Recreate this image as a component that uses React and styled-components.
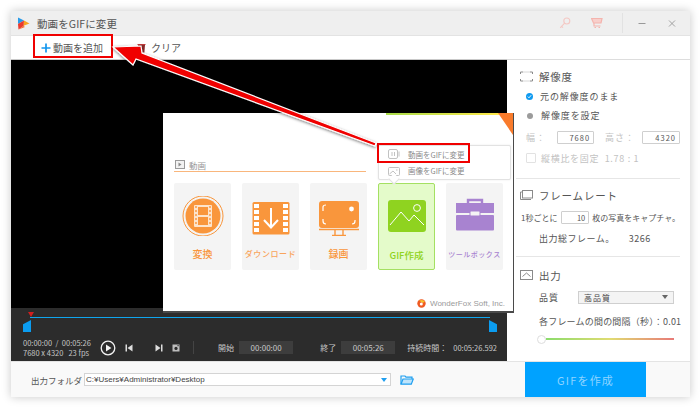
import React from 'react'
import styled, { createGlobalStyle } from 'styled-components'

const Global = createGlobalStyle`
  html, body { margin: 0; background: #fff; }
  * { box-sizing: border-box; }
  body { font-family: "Noto Sans CJK JP", "Noto Sans", sans-serif; }
`
const Stage = styled.div`
  position: relative;
  width: 700px;
  height: 407px;
  padding: 11px 10px 10px 11px;
  overflow: hidden;
`
const Window = styled.div`
  width: 679px;
  height: 386px;
  display: flex;
  flex-direction: column;
  background: #fff;
  box-shadow: 0 0 9px rgba(0, 0, 0, 0.22);
`
const TitleBar = styled.div`
  height: 25px;
  display: flex;
  align-items: center;
  padding-left: 6px;
  background: #efefef;
  border-bottom: 1px solid #e3e3e3;
`
const Title = styled.span`
  margin-left: 7px;
  font-size: 10.5px;
  color: #555;
  letter-spacing: 0.1px;
`
const TitleActions = styled.div`
  margin-left: auto;
  display: flex;
  align-items: center;
  height: 100%;
`
const Sep = styled.div`
  width: 1px;
  height: 20px;
  margin: 0 15px 0 19px;
  background: #e2e2e2;
`
const Toolbar = styled.div`
  height: 24px;
  display: flex;
  align-items: center;
  padding-left: 30px;
  background: #fff;
  border-bottom: 1px solid #c9c9c9;
`
const ToolButton = styled.div`
  display: flex;
  align-items: center;
  gap: 2px;
  width: ${p => p.$w}px;
  font-size: 10px;
  color: #555;
`
const Main = styled.div`
  height: 301px;
  display: flex;
`
const Left = styled.div`
  width: 496px;
  display: flex;
  flex-direction: column;
`
const Video = styled.div`
  flex: 1;
  background: #000;
`
const Controls = styled.div`
  height: 53px;
  padding: 4px 10px 0 12px;
  background: #2c2c2c;
  color: #c8c8c8;
`
const Track = styled.div`
  position: relative;
  height: 24px;
`
const TrackLine = styled.div`
  position: absolute;
  left: 7px;
  right: 7px;
  top: 5px;
  height: 1px;
  background: #10a6ee;
`
const Handle = styled.div`
  position: absolute;
  top: 8px;
  ${p => (p.$right ? 'right: 0;' : 'left: 0;')}
  width: 8px;
  height: 12px;
  background: #0b9cf0;
  clip-path: ${p =>
    p.$right
      ? 'polygon(0 0, 100% 35%, 100% 100%, 0 100%)'
      : 'polygon(100% 0, 0 35%, 0 100%, 100% 100%)'};
`
const Pin = styled.div`
  position: absolute;
  left: 5px;
  top: 0;
  width: 0;
  height: 0;
  border-left: 3.5px solid transparent;
  border-right: 3.5px solid transparent;
  border-top: 5px solid #d11f1f;
`
const ControlRow = styled.div`
  display: flex;
  align-items: center;
  height: 23px;
`
const TimeInfo = styled.div`
  width: 78px;
  font-size: 7.5px;
  line-height: 10px;
  white-space: pre;
  color: #c4c4c4;
`
const Buttons = styled.div`
  width: 95px;
  display: flex;
  align-items: center;
  gap: 9px;
`
const VSep = styled.div`
  width: 1px;
  height: 13px;
  margin-right: 24px;
  background: #444;
`
const CtlLabel = styled.span`
  font-size: 8px;
  margin-right: ${p => p.$mr || 5}px;
  white-space: nowrap;
`
const TimeBox = styled.div`
  width: 55px;
  height: 13px;
  margin-right: ${p => p.$mr || 0}px;
  background: #3d3d3d;
  color: #c8c8c8;
  font-size: 8px;
  line-height: 13px;
  text-align: center;
`
const Duration = styled.span`
  font-size: 7.5px;
`
const Panel = styled.div`
  width: 183px;
  padding: 0 10px 0 9px;
  background: #fff;
  border-top: 1px solid #ddd;
  margin-top: -1px;
  font-size: 9px;
  color: #555;
`
const Section = styled.div`
  padding: ${p => p.$pt}px 0 ${p => p.$pb}px;
  border-bottom: ${p => (p.$last ? 'none' : '1px solid #e6e6e6')};
`
const Row = styled.div`
  display: flex;
  align-items: center;
  height: ${p => p.$h}px;
  padding-left: ${p => p.$pl || 0}px;
  color: ${p => (p.$muted ? '#c2c2c2' : '#555')};
  white-space: nowrap;
  letter-spacing: ${p => p.$ls || 0}px;
`
const HeadText = styled.span`
  font-size: 10.5px;
  margin-left: 6px;
  letter-spacing: 0.8px;
  color: #555;
`
const RadioOn = styled.span`
  width: 7px;
  height: 7px;
  margin-right: 7px;
  border-radius: 50%;
  background: #0f9af0;
  display: flex;
  align-items: center;
  justify-content: center;
`
const RadioOff = styled.span`
  width: 6px;
  height: 6px;
  margin: 0 8px 0 1px;
  border-radius: 50%;
  background: #9b9b9b;
`
const NumBox = styled.div`
  width: ${p => p.$w}px;
  height: 13px;
  margin: ${p => p.$m || '0'};
  padding-right: 3px;
  border: 1px solid #cfcfcf;
  border-radius: 1px;
  background: #fff;
  color: #555;
  font-size: 7.5px;
  line-height: 11px;
  text-align: right;
`
const Check = styled.span`
  width: 10px;
  height: 10px;
  margin-right: 5px;
  border: 1px solid #e2e2e2;
  border-radius: 1px;
`
const SelectBox = styled.div`
  width: 96px;
  height: 13px;
  margin-left: 19px;
  padding: 0 5px;
  display: flex;
  align-items: center;
  justify-content: space-between;
  border: 1px solid #cfcfcf;
  background: #f4f4f4;
  font-size: 8px;
  color: #444;
`
const CaretDown = styled.span`
  width: 0;
  height: 0;
  border-left: 3px solid transparent;
  border-right: 3px solid transparent;
  border-top: 4px solid ${p => p.$c || '#666'};
`
const Slider = styled.div`
  display: flex;
  align-items: center;
  height: 12px;
  padding-left: 21px;
`
const Thumb = styled.span`
  width: 9px;
  height: 9px;
  border: 1px solid #ddd;
  border-radius: 50%;
  background: #fff;
`
const Grad = styled.span`
  width: 128px;
  height: 2px;
  background: linear-gradient(90deg, #8bdc6c, #e0dc72 50%, #e87a78);
`
const Bottom = styled.div`
  flex: 1;
  display: flex;
  align-items: center;
  padding-left: 20px;
  background: #f9f9f9;
  border-top: 1px solid #e4e4e4;
`
const FolderLabel = styled.span`
  width: 53px;
  font-size: 8.5px;
  color: #555;
  white-space: nowrap;
`
const PathBox = styled.div`
  width: 307px;
  height: 13px;
  display: flex;
  align-items: center;
  justify-content: space-between;
  padding: 0 3px 0 1px;
  border: 1px solid #d4d4d4;
  background: #fff;
  font-family: "Liberation Sans", sans-serif;
  font-size: 8px;
  color: #444;
`
const GoButton = styled.div`
  width: 121px;
  height: 35px;
  margin-left: 111px;
  display: flex;
  align-items: center;
  justify-content: center;
  background: #00a2ff;
  color: #8fd4ff;
  font-size: 11px;
  letter-spacing: 1.2px;
`

/* the pasted-in start screen and the red annotations lie over the app */
const Inset = styled.div`
  position: absolute;
  left: 163px;
  top: 113px;
  width: 351px;
  height: 200px;
  padding: 45px 0 0 11px;
  background: #fff;
  border-right: 1px solid #4a4a4a;
  border-bottom: 2px solid #4a4a4a;
  overflow: visible;
`
const Stripe = styled.div`
  position: absolute;
  left: 223px;
  right: 14px;
  top: 0;
  height: 2px;
  background: linear-gradient(90deg, #a9dc4a, #ffe94a);
`
const Corner = styled.div`
  position: absolute;
  right: 0;
  top: 0;
  width: 15px;
  height: 22px;
  background: #f97b2c;
  clip-path: polygon(0 0, 100% 0, 100% 100%);
`
const SectionHead = styled.div`
  width: 192px;
  height: 14px;
  display: flex;
  align-items: center;
  gap: 4px;
  padding-left: 1px;
  border-bottom: 1px solid #f9b67c;
  font-size: 8.5px;
  color: #999;
`
const Cards = styled.div`
  display: flex;
  gap: 11px;
  margin-top: 11px;
`
const Card = styled.div`
  width: 57px;
  height: 87px;
  padding-top: 13px;
  display: flex;
  flex-direction: column;
  align-items: center;
  border-radius: 2px;
  background: ${p => (p.$active ? '#e4fbca' : '#f4f4f4')};
  border: ${p => (p.$active ? '1px solid #a4e062' : 'none')};
`
const CardLabel = styled.div`
  height: 14px;
  margin-top: 11px;
  font-size: ${p => p.$fs || 10}px;
  line-height: 14px;
  letter-spacing: ${p => p.$ls || 0}px;
  color: ${p => p.$c};
  font-weight: 500;
  white-space: nowrap;
`
const Credit = styled.div`
  position: absolute;
  right: 8px;
  bottom: 3px;
  display: flex;
  align-items: center;
  gap: 4px;
  font-family: "Liberation Sans", sans-serif;
  font-size: 8px;
  color: #9a9a9a;
`
const Popup = styled.div`
  position: absolute;
  left: 215px;
  top: 32px;
  width: 133px;
  height: 35px;
  padding-left: 9px;
  display: flex;
  flex-direction: column;
  background: #fff;
  border: 1px solid #e2e2e2;
  border-radius: 2px;
  box-shadow: 0 0 2px rgba(0, 0, 0, 0.1);
  &::after {
    content: "";
    position: absolute;
    left: 11px;
    bottom: -4px;
    width: 7px;
    height: 7px;
    background: #fff;
    border-right: 1px solid #e2e2e2;
    border-bottom: 1px solid #e2e2e2;
    transform: rotate(45deg);
  }
`
const PopItem = styled.div`
  flex: 1;
  display: flex;
  align-items: center;
  gap: 8px;
  font-size: 7.5px;
  color: #8a8a8a;
`
const RedBox = styled.div`
  position: absolute;
  left: ${p => p.$x}px;
  top: ${p => p.$y}px;
  width: ${p => p.$w}px;
  height: ${p => p.$h}px;
  border: 2px solid #f00000;
`
const ArrowLayer = styled.svg`
  position: absolute;
  left: 0;
  top: 0;
  width: 700px;
  height: 407px;
  pointer-events: none;
`

const Logo = () => (
  <svg width="13" height="13" viewBox="0 0 13 13">
    <path d="M1 0.5 L7 3.5 L1 7z" fill="#2a9be8" />
    <path d="M7 3.5 L12.5 6.5 L6 9z" fill="#f7a520" />
    <path d="M1 7 L7 3.5 L6.5 9 L1.5 12.5z" fill="#ea3a2e" />
    <path d="M1.5 12.5 L6.5 9 L8 10z" fill="#f26a2a" />
  </svg>
)
const Key = () => (
  <svg width="12" height="12" viewBox="0 0 12 12" fill="none" stroke="#f4c8c4" strokeWidth="1.1">
    <circle cx="7.8" cy="4" r="3" />
    <path d="M5.6 6.2 L1.2 10.8 M2.6 9.4 L4 10.6" />
  </svg>
)
const Cart = () => (
  <svg width="12" height="12" viewBox="0 0 12 12" fill="none" stroke="#f4b4ae" strokeWidth="1.2">
    <path d="M0.5 1.5 H11 L10 6 H2.5z" fill="#f8cfcb" />
    <path d="M3 6 V9 H9.5 M3.5 10.5 h1.5 M7.5 10.5 h1.5" />
  </svg>
)
const Plus = () => (
  <svg width="10" height="10" viewBox="0 0 10 10">
    <path d="M5 0.5 V9.5 M0.5 5 H9.5" stroke="#1296ee" strokeWidth="1.7" />
  </svg>
)
const Trash = () => (
  <svg width="9" height="10" viewBox="0 0 9 10">
    <path d="M1 2 H8 L7.4 9.5 H1.6z" fill="#8d2c2c" />
    <path d="M0.5 1.5 H8.5" stroke="#c23a3a" strokeWidth="1" />
  </svg>
)
const Play = () => (
  <svg width="16" height="16" viewBox="0 0 16 16">
    <circle cx="8" cy="8" r="6.8" fill="none" stroke="#f2f2f2" strokeWidth="1.3" />
    <path d="M6 4.6 L11.4 8 L6 11.4z" fill="#f2f2f2" />
  </svg>
)
const Prev = () => (
  <svg width="8" height="8" viewBox="0 0 8 8" fill="#ddd">
    <path d="M0.5 0.5 H2 V7.5 H0.5z M7.5 0.5 V7.5 L2.5 4z" />
  </svg>
)
const Next = () => (
  <svg width="8" height="8" viewBox="0 0 8 8" fill="#ddd">
    <path d="M7.5 0.5 H6 V7.5 H7.5z M0.5 0.5 V7.5 L5.5 4z" />
  </svg>
)
const Snap = () => (
  <svg width="8" height="8" viewBox="0 0 8 8">
    <rect x="0.5" y="0.5" width="7" height="7" fill="#bdbdbd" />
    <circle cx="4" cy="4.4" r="1.6" fill="#2c2c2c" />
    <rect x="5.4" y="1.2" width="1.4" height="1" fill="#2c2c2c" />
  </svg>
)
const ResIcon = () => (
  <svg width="13" height="11" viewBox="0 0 13 11" fill="none" stroke="#8a8a8a" strokeWidth="1">
    <path d="M0.5 3 V1 H3 M10 1 H12.5 V3 M12.5 8 V10 H10 M3 10 H0.5 V8" />
    <path d="M3 1 H10 M3 10 H10" stroke="#d8d8d8" />
  </svg>
)
const FrameIcon = () => (
  <svg width="13" height="10" viewBox="0 0 13 10" fill="none" stroke="#8a8a8a" strokeWidth="1">
    <rect x="2.5" y="0.5" width="10" height="7.5" />
    <path d="M2.5 2 H0.5 V9.5 H11" />
  </svg>
)
const OutIcon = () => (
  <svg width="13" height="10" viewBox="0 0 13 10" fill="none" stroke="#8a8a8a" strokeWidth="1">
    <rect x="0.5" y="0.5" width="12" height="9" />
    <path d="M2.5 6.5 L6.5 3 L10.5 6.5" />
  </svg>
)
const Folder = () => (
  <svg width="14" height="10" viewBox="0 0 14 10" fill="none" stroke="#1f9ff0" strokeWidth="1.2">
    <path d="M1 9 V1 H5 L6 2.2 H12 V4" />
    <path d="M1 9.2 L3 4 H13.3 L11.3 9.2z" fill="#bfe4fb" />
  </svg>
)
const SmallFilm = () => (
  <svg width="10" height="9" viewBox="0 0 10 9">
    <rect x="0.5" y="0.5" width="9" height="8" fill="#f2f2f2" stroke="#9a9a9a" />
    <path d="M3.5 2.5 L6.5 4.5 L3.5 6.5z" fill="#888" />
  </svg>
)
const Convert = () => (
  <svg width="44" height="40" viewBox="0 0 44 40">
    <circle cx="22" cy="20" r="20" fill="none" stroke="#f9963c" strokeWidth="1" />
    <circle cx="22" cy="20" r="17.5" fill="#f9963c" />
    <rect x="13" y="9" width="18" height="22" fill="#fde4cc" rx="1" />
    <rect x="17" y="11" width="10" height="8" fill="#f9963c" />
    <rect x="17" y="21" width="10" height="8" fill="#f9963c" />
    <path d="M15 10 V30" stroke="#f9963c" strokeWidth="1.4" strokeDasharray="2 2" />
    <path d="M29 10 V30" stroke="#f9963c" strokeWidth="1.4" strokeDasharray="2 2" />
  </svg>
)
const Download = () => (
  <svg width="38" height="40" viewBox="0 0 38 40">
    <rect x="0.5" y="6" width="37" height="32.5" rx="1.5" fill="#f9963c" />
    {[8, 14, 20, 26, 32].map(y => (
      <React.Fragment key={y}>
        <rect x="2" y={y} width="5" height="4" fill="#fff" />
        <rect x="31" y={y} width="5" height="4" fill="#fff" />
      </React.Fragment>
    ))}
    <path d="M19 12 V31 M12 24 L19 31.5 L26 24" fill="none" stroke="#fff" strokeWidth="2" />
  </svg>
)
const Screen = () => (
  <svg width="42" height="40" viewBox="0 0 42 40">
    <rect x="1" y="5" width="40" height="27" rx="3" fill="#f9963c" />
    <path d="M1 33.5 H41" stroke="#f9963c" strokeWidth="1.4" />
    <path d="M14 39.5 H28 M17 34 V39 M25 34 V39" stroke="#f9963c" strokeWidth="1.4" />
    <path d="M5 15 V11 Q5 9 8 9 M5 23 V25 Q5 28 8 28 M37 24 V25 Q37 28 34 28" fill="none" stroke="#fff" strokeWidth="1.2" />
    <circle cx="33.5" cy="13" r="2.4" fill="#fff" />
  </svg>
)
const Picture = () => (
  <svg width="38" height="40" viewBox="0 0 38 40">
    <rect x="0" y="3" width="38" height="32" rx="3" fill="#8fd320" />
    <circle cx="29" cy="11" r="3.4" fill="none" stroke="#fff" strokeWidth="1" />
    <path d="M2 28 L13 15 L21 24 L26 18 L36 28" fill="none" stroke="#fff" strokeWidth="1" />
  </svg>
)
const Toolbox = () => (
  <svg width="40" height="40" viewBox="0 0 40 40">
    <path d="M13 8 V4 H27 V8" fill="none" stroke="#a883d0" strokeWidth="2.4" />
    <rect x="1" y="7" width="38" height="10" fill="#a883d0" />
    <rect x="1" y="19" width="38" height="15.5" rx="1" fill="#a883d0" />
    <rect x="15" y="15" width="10" height="5" rx="1" fill="#f4f4f4" stroke="#a883d0" />
  </svg>
)
const FoxMark = () => (
  <svg width="9" height="9" viewBox="0 0 9 9">
    <circle cx="4.5" cy="4.5" r="4.2" fill="#ef5a22" />
    <path d="M2 1.5 Q6 0 8 2.5 L5.5 4z" fill="#f7c02c" />
    <circle cx="4.3" cy="5" r="1.5" fill="#fff" />
  </svg>
)
const PopFilm = () => (
  <svg width="12" height="10" viewBox="0 0 12 10" fill="none" stroke="#bbb" strokeWidth="0.9">
    <rect x="0.5" y="0.5" width="9" height="9" rx="1.5" />
    <path d="M4 3 V7 M6.5 3 V7 M11 2.5 V7.5" />
  </svg>
)
const PopPic = () => (
  <svg width="12" height="10" viewBox="0 0 12 10" fill="none" stroke="#bbb" strokeWidth="0.9">
    <rect x="0.5" y="1.5" width="11" height="8" rx="1" />
    <path d="M1.5 8 L5 5 L8 8 M8 4 h1.5" />
  </svg>
)

export default function App() {
  return (
    <Stage>
      <Global />
      <Window>
        <TitleBar>
          <Logo />
          <Title>動画をGIFに変更</Title>
          <TitleActions>
            <Key />
            <span style={{ width: 20 }} />
            <Cart />
            <Sep />
            <svg width="8" height="8" viewBox="0 0 8 8">
              <path d="M0.5 4.5 H7.5" stroke="#999" strokeWidth="1" />
            </svg>
            <span style={{ width: 22 }} />
            <svg width="8" height="8" viewBox="0 0 8 8">
              <path d="M1 1.5 L7 7.5 M7 1.5 L1 7.5" stroke="#999" strokeWidth="0.9" />
            </svg>
            <span style={{ width: 14 }} />
          </TitleActions>
        </TitleBar>
        <Toolbar>
          <ToolButton $w={96}>
            <Plus />
            動画を追加
          </ToolButton>
          <ToolButton $w={60}>
            <Trash />
            <span style={{ marginLeft: 3 }}>クリア</span>
          </ToolButton>
        </Toolbar>
        <Main>
          <Left>
            <Video />
            <Controls>
              <Track>
                <TrackLine />
                <Pin />
                <Handle />
                <Handle $right />
              </Track>
              <ControlRow>
                <TimeInfo>{'00:00:00  /  00:05:26\n7680 x 4320   23 fps'}</TimeInfo>
                <Buttons>
                  <Play />
                  <Prev />
                  <span style={{ width: 4 }} />
                  <Next />
                  <Snap />
                </Buttons>
                <VSep />
                <CtlLabel>開始</CtlLabel>
                <TimeBox $mr={27}>00:00:00</TimeBox>
                <CtlLabel>終了</CtlLabel>
                <TimeBox $mr={12}>00:05:26</TimeBox>
                <CtlLabel $mr={6}>持続時間：</CtlLabel>
                <Duration>00:05:26.592</Duration>
              </ControlRow>
            </Controls>
          </Left>
          <Panel>
            <Section $pt={6} $pb={11}>
              <Row $h={20} $pl={4}>
                <ResIcon />
                <HeadText>解像度</HeadText>
              </Row>
              <Row $h={20} $pl={10} $ls={0.9}>
                <RadioOn>
                  <svg width="5" height="5" viewBox="0 0 5 5">
                    <path d="M0.8 2.6 L2 3.8 L4.2 1.2" fill="none" stroke="#fff" strokeWidth="0.9" />
                  </svg>
                </RadioOn>
                元の解像度のまま
              </Row>
              <Row $h={19} $pl={10} $ls={0.9}>
                <RadioOff />
                解像度を設定
              </Row>
              <Row $h={24} $pl={10} $muted $ls={1}>
                幅：
                <NumBox $w={41} $m="0 0 0 11px">7680</NumBox>
                <span style={{ marginLeft: 11 }}>高さ：</span>
                <NumBox $w={42} $m="0 0 0 7px">4320</NumBox>
              </Row>
              <Row $h={18} $pl={10} $muted $ls={0.7}>
                <Check />
                縦横比を固定&nbsp;&nbsp;1.78 : 1
              </Row>
            </Section>
            <Section $pt={6} $pb={9}>
              <Row $h={20} $pl={4}>
                <FrameIcon />
                <HeadText>フレームレート</HeadText>
              </Row>
              <Row $h={24} $pl={5} style={{ fontSize: 8 }}>
                1秒ごとに
                <NumBox $w={41} $m="0 3px 0 4px">10</NumBox>
                枚の写真をキャプチャ。
              </Row>
              <Row $h={18} $pl={23} $ls={0.5}>
                出力総フレーム。
                <span style={{ marginLeft: 14 }}>3266</span>
              </Row>
            </Section>
            <Section $pt={8} $pb={0} $last>
              <Row $h={20} $pl={4}>
                <OutIcon />
                <HeadText>出力</HeadText>
              </Row>
              <Row $h={24} $pl={23} $ls={1}>
                品質
                <SelectBox>
                  高品質
                  <CaretDown />
                </SelectBox>
              </Row>
              <Row $h={24} $pl={23} $ls={0.2}>
                各フレームの間の間隔（秒）：0.01
              </Row>
              <Slider>
                <Thumb />
                <Grad />
              </Slider>
            </Section>
          </Panel>
        </Main>
        <Bottom>
          <FolderLabel>出力フォルダ：</FolderLabel>
          <PathBox>
            C:¥Users¥Administrator¥Desktop
            <CaretDown $c="#1f9ff0" />
          </PathBox>
          <span style={{ width: 9 }} />
          <Folder />
          <GoButton>GIFを作成</GoButton>
        </Bottom>
      </Window>

      <Inset>
        <Stripe />
        <Corner />
        <SectionHead>
          <SmallFilm />
          動画
        </SectionHead>
        <Cards>
          <Card>
            <Convert />
            <CardLabel $c="#f9963c">変換</CardLabel>
          </Card>
          <Card>
            <Download />
            <CardLabel $c="#f9a45c" $fs={8} $ls={0.6}>ダウンロード</CardLabel>
          </Card>
          <Card>
            <Screen />
            <CardLabel $c="#f9963c">録画</CardLabel>
          </Card>
          <Card $active>
            <Picture />
            <CardLabel $c="#8fd320" $fs={9.5}>GIF作成</CardLabel>
          </Card>
          <Card>
            <Toolbox />
            <CardLabel $c="#a883d0" $fs={7} $ls={0.5}>ツールボックス</CardLabel>
          </Card>
        </Cards>
        <Popup>
          <PopItem>
            <PopFilm />
            動画をGIFに変更
          </PopItem>
          <PopItem>
            <PopPic />
            画像をGIFに変更
          </PopItem>
        </Popup>
        <Credit>
          <FoxMark />
          WonderFox Soft, Inc.
        </Credit>
      </Inset>

      <RedBox $x={33} $y={34} $w={80} $h={24} />
      <RedBox $x={377} $y={143} $w={93} $h={20} />
      <ArrowLayer viewBox="0 0 700 407">
        <defs>
          <filter id="soft" x="-10%" y="-10%" width="120%" height="130%">
            <feDropShadow dx="0" dy="1" stdDeviation="1.5" floodColor="#000" floodOpacity="0.55" />
          </filter>
        </defs>
        <polygon
          points="113,47 141,46 142,53 376,143 375,146 136,59 133,65"
          fill="#f00000"
          stroke="#fff"
          strokeWidth="1.2"
          filter="url(#soft)"
        />
      </ArrowLayer>
    </Stage>
  )
}
